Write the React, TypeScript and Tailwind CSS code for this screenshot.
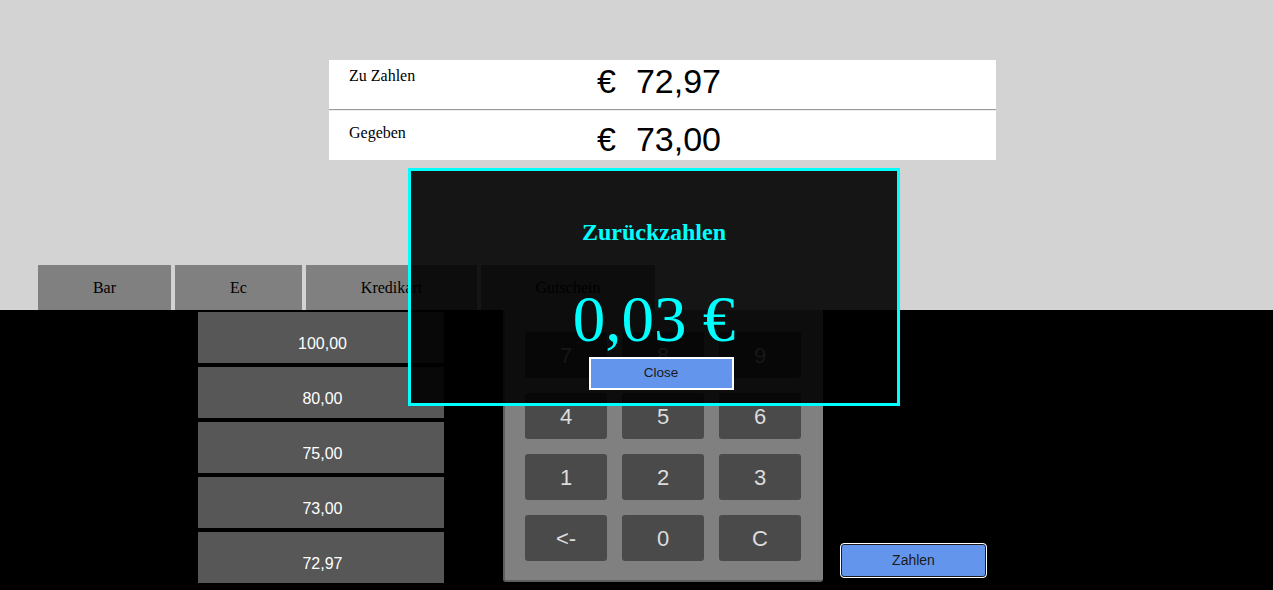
import React from "react";

const serif = "font-['Liberation_Serif','Times_New_Roman',serif]";
const sans = "font-['Liberation_Sans',Arial,sans-serif]";

const tabs = [
  { label: "Bar", w: "w-[133px]" },
  { label: "Ec", w: "w-[127px]" },
  { label: "Kredikart", w: "w-[171px]" },
  { label: "Gutschein", w: "w-[174px]" },
];

const quick = ["100,00", "80,00", "75,00", "73,00", "72,97"];
const keys = ["7", "8", "9", "4", "5", "6", "1", "2", "3", "<-", "0", "C"];

export default function App() {
  return (
    <div className="relative w-[1273px] h-[590px] overflow-hidden">
      {/* Top area */}
      <div className="h-[310px] bg-[#d3d3d3] flex flex-col">
        <div className="mt-[60px] ml-[329px] w-[667px] bg-white">
          <div className="h-[49px] grid grid-cols-[268px_1fr]">
            <div className={`${serif} text-[16px] leading-[18px] text-black pl-[20px] pt-[7px]`}>Zu Zahlen</div>
            <div className={`${sans} text-[34px] leading-[40px] text-black flex pt-[1px]`}>
              <span>€</span>
              <span className="ml-[20px]">72,97</span>
            </div>
          </div>
          <div className="border-t border-t-[#9a9a9a] border-b border-b-[#eeeeee]" />
          <div className="h-[49px] grid grid-cols-[268px_1fr] pt-[7px]">
            <div className={`${serif} text-[16px] leading-[18px] text-black pl-[20px] pt-[6px]`}>Gegeben</div>
            <div className={`${sans} text-[34px] leading-[40px] text-black flex pt-[1px]`}>
              <span>€</span>
              <span className="ml-[20px]">73,00</span>
            </div>
          </div>
        </div>

        {/* Payment tabs */}
        <div className="mt-auto ml-[38px] flex gap-[4px]">
          {tabs.map((t) => (
            <div
              key={t.label}
              className={`${t.w} h-[45px] bg-[#808080] flex items-center justify-center ${serif} text-[16px] text-black`}
            >
              {t.label}
            </div>
          ))}
        </div>
      </div>

      {/* Bottom area */}
      <div className="h-[280px] bg-black flex">
        {/* Quick amounts */}
        <div className="ml-[198px] mt-[2px] w-[246px] flex flex-col gap-[4px]">
          {quick.map((q) => (
            <div
              key={q}
              className={`h-[51px] bg-[#575757] flex items-center justify-center pt-[12px] pl-[3px] ${sans} text-[16px] text-white`}
            >
              {q}
            </div>
          ))}
        </div>

        {/* Keypad */}
        <div className="ml-[59px] w-[320px] h-[272px] bg-[#808080] rounded-b-[3px] border-l-2 border-b-2 border-[#5f5f5f] pl-[20px] pt-[22px] grid grid-cols-[82px_82px_82px] auto-rows-[46px] gap-[15px]">
          {keys.map((k) => (
            <div
              key={k}
              className={`rounded-[3px] bg-[#4a4a4a] flex items-center justify-center ${sans} text-[22px] text-[#dcdcdc]`}
            >
              {k}
            </div>
          ))}
        </div>

        {/* Pay */}
        <div className="ml-[17px] mt-[233px]">
          <button
            className={`w-[147px] h-[35px] rounded-[4px] border border-white bg-[#6495ed] shadow-[inset_0_0_0_1px_#1a1a1a] ${sans} text-[14px] text-[#1a1a1a]`}
          >
            Zahlen
          </button>
        </div>
      </div>

      {/* Change dialog */}
      <div className="absolute left-[408px] top-[168px] w-[492px] h-[238px] border-[3px] border-[#00ffff] bg-black/90 flex flex-col items-center">
        <h2 className={`${serif} font-bold text-[24px] leading-[28px] text-[#00ffff] mt-[47px]`}>Zurückzahlen</h2>
        <div className={`${serif} text-[65px] leading-[74px] text-[#00ffff] mt-[36px]`}>0,03 €</div>
        <button
          className={`mt-[1px] ml-[14px] w-[145px] h-[33px] border-2 border-white bg-[#6495ed] ${sans} text-[13.5px] text-[#1a1a1a]`}
        >
          Close
        </button>
      </div>
    </div>
  );
}
